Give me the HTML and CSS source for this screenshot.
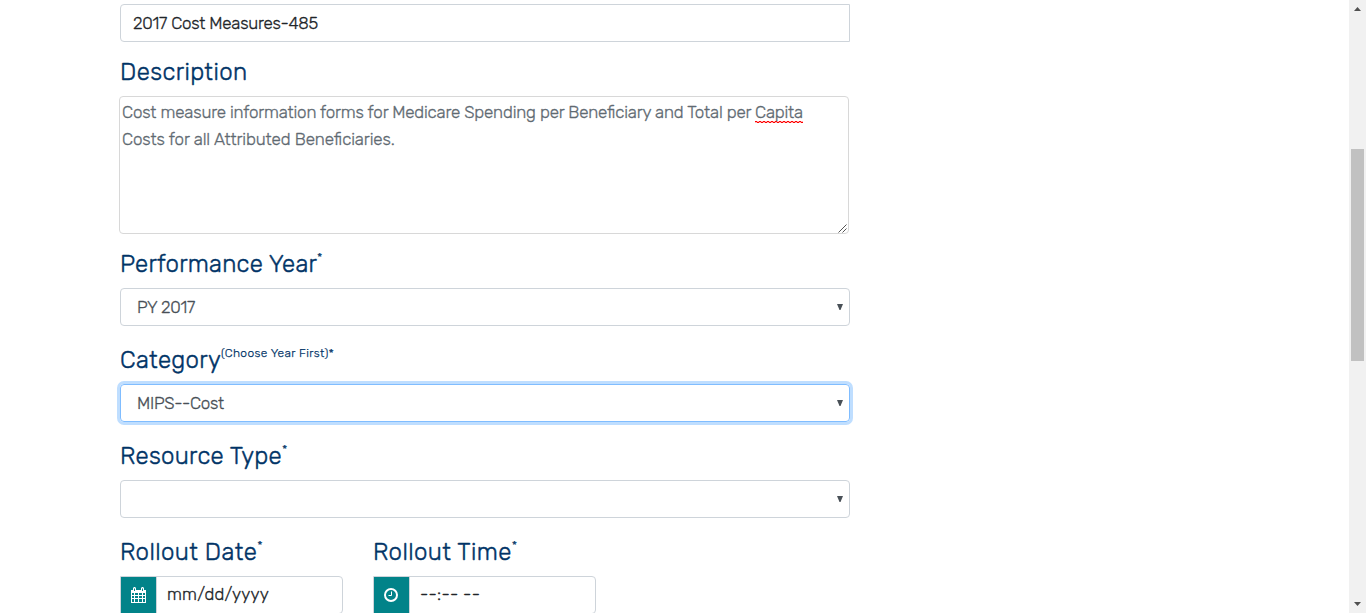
FILE: index.html
```html
<!DOCTYPE html>
<html lang="en">
<head>
<meta charset="utf-8">
<title>Edit Resource</title>
<link rel="stylesheet" href="styles.css">
</head>
<body>
<main class="page">
  <form class="form">
    <div class="control control-title"><span class="t-title">2017 Cost Measures-485</span></div>

    <h2 class="label"><span class="l-desc">Description</span></h2>
    <div class="textarea">
      <div class="line line-first">Cost measure information forms for Medicare Spending per Beneficiary and Total per <span class="misspelled">Capita</span></div>
      <div class="line line-second">Costs for all Attributed Beneficiaries.</div>
      <svg class="grip" width="9" height="9" viewBox="0 0 9 9"><path d="M.5 8.5l8-8M4.5 8.5l4-4"/></svg>
    </div>

    <h2 class="label"><span class="l-year">Performance Year</span><sup>*</sup></h2>
    <div class="control select"><span class="t-year">PY 2017</span><svg class="arrow" width="6" height="6" viewBox="0 0 6 6"><path d="M0 0h6L3.5 6h-1z"/></svg></div>

    <h2 class="label"><span class="l-cat">Category</span><sup class="hint">(Choose Year First)*</sup></h2>
    <div class="control select focused"><span class="t-cat">MIPS--Cost</span><svg class="arrow" width="6" height="6" viewBox="0 0 6 6"><path d="M0 0h6L3.5 6h-1z"/></svg></div>

    <h2 class="label"><span class="l-res">Resource Type</span><sup>*</sup></h2>
    <div class="control select"><span></span><svg class="arrow" width="6" height="6" viewBox="0 0 6 6"><path d="M0 0h6L3.5 6h-1z"/></svg></div>

    <div class="rollout">
      <div>
        <h2 class="label"><span class="l-date">Rollout Date</span><sup>*</sup></h2>
        <div class="group">
          <span class="addon"><svg width="15" height="16" viewBox="0 0 15 16"><path class="solid" fill-rule="evenodd" d="M0 3h2V1l1-1h1l1 1v2h5V1l1-1h1l1 1v2h2v13H0zM1 6v2h2V6zM4 6v2h3V6zM8 6v2h3V6zM12 6v2h2V6zM1 9v2h2V9zM4 9v2h3V9zM8 9v2h3V9zM12 9v2h2V9zM1 12v3h2v-3zM4 12v3h3v-3zM8 12v3h3v-3zM12 12v3h2v-3zM3 1.500v2.500h1V1.500zM11 1.500v2.500h1V1.500z"/></svg></span>
          <span class="value t-date">mm/dd/yyyy</span>
        </div>
      </div>
      <div>
        <h2 class="label"><span class="l-time">Rollout Time</span><sup>*</sup></h2>
        <div class="group">
          <span class="addon addon-clock"><svg width="14" height="14" viewBox="0 0 14 14"><circle class="ring" cx="7" cy="7" r="6"/><path class="hands" d="M7.500 3.500v4h-3"/></svg></span>
          <span class="value t-time">--:-- --</span>
        </div>
      </div>
    </div>
  </form>
  <div class="scrollbar">
    <svg width="7" height="4" viewBox="0 0 7 4"><path d="M0 4h7L3.500 0z"/></svg>
    <div class="thumb"></div>
    <svg class="down" width="7" height="4" viewBox="0 0 7 4"><path d="M0 0h7L3.500 4z"/></svg>
  </div>
</main>
</body>
</html>
```
FILE: styles.css
```css
* { box-sizing: border-box; }
body { margin: 0; background: #fff; font-family: Rubik, Roboto, sans-serif; font-size: 17px; font-weight: 300; -webkit-text-stroke: .3px; color: #212529; overflow: hidden; }
.page { display: flex; justify-content: space-between; height: 613px; overflow: hidden; }
.form { width: 730px; margin-left: 120px; padding-top: 4px; }
svg { display: block; flex: none; }
.control { display: flex; align-items: center; height: 38px; padding: 0 12px; border: 1px solid #ced4da; border-radius: 4px; white-space: nowrap; }
.control-title { border-radius: 4px 0 0 4px; }
.label { height: 54px; margin: 0; padding-top: 15px; font-size: 24px; font-weight: 300; -webkit-text-stroke: .45px; line-height: 30px; color: #003366; white-space: nowrap; }
.control + .label, .rollout .label { height: 58px; padding-top: 19px; }
.control-title + .label { height: 54px; padding-top: 15px; }
sup { font-size: 12px; line-height: 0; vertical-align: 11px; -webkit-text-stroke: .25px; }
.hint { letter-spacing: .35px; }
.textarea { position: relative; height: 138px; margin: 0 1px 0 -1px; padding: 2px; border: 1px solid #d8d8d8; border-radius: 4px; color: #5f6a72; }
.line { line-height: 27px; white-space: nowrap; font-feature-settings: "liga" 1; }
.misspelled {
  padding-bottom: 1px;
  background:
    repeating-linear-gradient(90deg, #f00 0 2px, #ffb0b0 2px 4px) 0 calc(100% - 1px) / 100% 1px no-repeat,
    repeating-linear-gradient(90deg, #ffb0b0 0 2px, #f00 2px 4px) 0 100% / 100% 1px no-repeat;
}
.grip { position: absolute; right: 1px; bottom: 0; fill: none; stroke: #555; }
.select { justify-content: space-between; padding: 0 6px 0 16px; color: #495057; }
.arrow { fill: #495057; }
.focused { border-color: #80bdff; box-shadow: 0 0 0 3px #bfdeff; }
.rollout { display: flex; gap: 30px; }
.rollout > div { width: 223px; }
.group { display: flex; height: 38px; border: 1px solid #ced4da; border-radius: 0 4px 4px 0; }
.addon { display: flex; align-items: center; justify-content: center; width: 36px; background: #028389; border-right: 1px solid #ced4da; }
.addon-clock { padding-right: 1px; }
.solid { fill: #fff; }
.ring { fill: none; stroke: #fff; stroke-width: 2; }
.hands { fill: none; stroke: #fff; }
.value { padding-left: 10px; line-height: 35px; white-space: nowrap; }
.scrollbar { display: flex; flex-direction: column; align-items: center; width: 17px; background: #f1f1f1; padding: 7px 0; fill: #505050; }
.thumb { width: 13px; height: 212px; margin-top: 138px; background: #c1c1c1; }
.down { margin-top: auto; }
.t-title { letter-spacing: -.25px; }
.line-first { letter-spacing: -.19px; }
.line-second { letter-spacing: -.11px; }
.t-year { letter-spacing: -.3px; }
.t-cat { letter-spacing: -.3px; }
.t-date { letter-spacing: .18px; }
.t-time { letter-spacing: .25px; }
.l-desc { letter-spacing: .41px; }
.l-year { letter-spacing: .22px; }
.l-cat { letter-spacing: .3px; }
.l-res { letter-spacing: .3px; }
.l-date, .l-time { letter-spacing: .4px; }
```
